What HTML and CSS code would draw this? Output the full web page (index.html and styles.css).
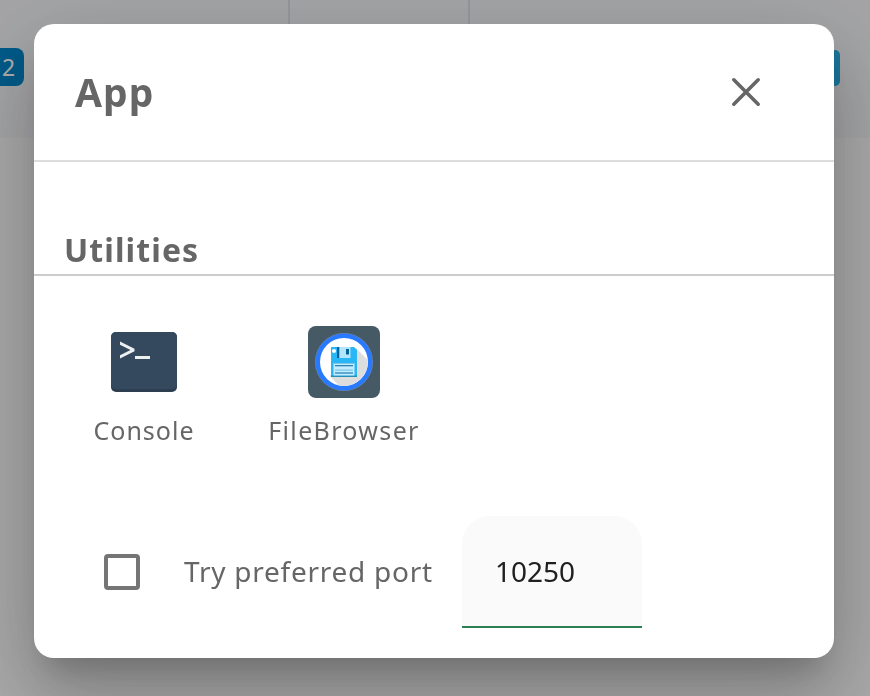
FILE: index.html
```html
<!DOCTYPE html>
<html lang="en">
<head>
<meta charset="utf-8">
<title>App</title>
<link rel="stylesheet" href="styles.css">
</head>
<body>
<div class="page">
  <div class="toolbar">
    <div class="cell cell-first"><span class="chip">2</span></div>
    <div class="cell cell-second"></div>
    <div class="cell cell-last"><span class="chip chip-light"></span></div>
  </div>
</div>
<div class="backdrop">
  <section class="dialog">
    <header class="dialog-header">
      <h1>App</h1>
      <svg class="close" viewBox="0 0 32 32"><path d="M3.800 3.800 28.200 28.200M28.200 3.800 3.800 28.200" fill="none" stroke="#666" stroke-width="3.600" stroke-linecap="round"/></svg>
    </header>
    <h2>Utilities</h2>
    <div class="apps">
      <div class="app app-console">
        <svg viewBox="0 0 72 72">
          <rect x="3" y="6" width="66" height="60" rx="5" fill="#2c3e50"/>
          <path d="M8 6h56a5 5 0 0 1 5 5v47a5 5 0 0 1-5 5H8a5 5 0 0 1-5-5V11a5 5 0 0 1 5-5z" fill="#34495e"/>
          <path d="M12 15.500 26.500 22.700V25.300L12 32.500V29.300L22.500 24 12 18.800zM27 30h15v3H27z" fill="#ecf0f1"/>
        </svg>
        <span>Console</span>
      </div>
      <div class="app app-files">
        <svg viewBox="0 0 72 72">
          <rect width="72" height="72" rx="8" fill="#455a64"/>
          <circle cx="36" cy="36" r="29" fill="#7488a0"/>
          <circle cx="36" cy="36" r="28.500" fill="#2979ff"/>
          <circle cx="36" cy="36" r="24" fill="#fff"/>
          <path d="M48 22 59.700 34A24 24 0 0 1 30.500 59.300L22 50z" fill="#ddd"/>
          <path d="M23 21h23l3 3v27H23z" fill="#29b6f6"/>
          <path d="M29 21h13.500v11H29z" fill="#b3e5fc"/>
          <path d="M29 21h2.300v11H29zM38 23h3v5.500h-3z" fill="#01649b"/>
          <circle cx="26" cy="25" r="2" fill="#fff"/>
          <path d="M23 49.500h26V51H23z" fill="#258fb5"/>
          <path d="M25.500 37h21v12.500h-21z" fill="#c2ecff"/>
          <path d="M25.500 37h21v1h-21zM27 43.500h18v1.200H27z" fill="#7fc6e4"/>
          <path d="M27 39.200h18v1H27zM27 46.500h18v1H27z" fill="#01649b"/>
        </svg>
        <span>FileBrowser</span>
      </div>
    </div>
    <div class="port-row">
      <span class="checkbox"></span>
      <span class="port-label">Try preferred port</span>
      <div class="field"><span class="port-value">10250</span></div>
    </div>
  </section>
</div>
</body>
</html>
```
FILE: styles.css
```css
* { box-sizing: border-box; }

body {
  margin: 0;
  width: 870px;
  height: 696px;
  overflow: hidden;
  background: #fafafa;
  color: #666;
  font-family: "Noto Sans", "Open Sans", sans-serif;
}

.toolbar {
  display: flex;
  height: 138px;
  background: #f3f4f6;
}

.cell { border-right: 2px solid #dce0e6; padding-top: 48px; }
.cell-first { width: 290px; }
.cell-second { width: 180px; }
.cell-last { width: 400px; border: 0; padding: 50px 30px 0 0; }

.chip {
  display: block;
  width: 24px;
  height: 38px;
  padding-left: 2px;
  border-radius: 0 8px 8px 0;
  background: #0086c9;
  color: #fff;
  font: 23px/39px "Noto Sans", sans-serif;
}

.chip-light {
  width: 40px;
  height: 36px;
  margin-left: auto;
  border-radius: 5px;
  background: #27afe8;
}

.backdrop {
  position: fixed;
  inset: 0;
  padding: 24px 36px 38px 34px;
  background: rgba(0, 0, 0, .32);
}

.dialog {
  height: 634px;
  border-radius: 20px;
  background: #fff;
  box-shadow: 0 22px 30px -14px rgba(0, 0, 0, .2),
    0 48px 76px 6px rgba(0, 0, 0, .14),
    0 18px 92px 16px rgba(0, 0, 0, .12);
}

.dialog-header {
  display: flex;
  align-items: center;
  justify-content: space-between;
  height: 138px;
  padding: 0 72px 0 41px;
  border-bottom: 2px solid #ddd;
}

h1, h2 { margin: 0; font-weight: 700; }
h1 { font-size: 39px; line-height: 54px; letter-spacing: 1px; }
.close { width: 32px; height: 32px; }

h2 {
  height: 114px;
  padding: 66px 0 0 30px;
  border-bottom: 2px solid #ccc;
  font-size: 32px;
  line-height: 44px;
  letter-spacing: 1.100px;
}

.apps { display: flex; padding: 50px 0 0 20px; height: 240px; }
.app {
  display: flex;
  flex-direction: column;
  align-items: center;
  font-size: 25px;
  line-height: 34px;
  letter-spacing: 1px;
}
.app-console { width: 180px; }
.app-files { width: 220px; letter-spacing: 1.350px; }
.app svg { width: 72px; height: 72px; margin-bottom: 15px; }

.port-row { display: flex; align-items: center; height: 112px; padding-left: 70px; }
.checkbox { width: 36px; height: 36px; border: 4px solid #757575; border-radius: 4px; }
.port-label {
  width: 278px;
  margin-left: 44px;
  padding-bottom: 2px;
  font-size: 28px;
  line-height: 38px;
  white-space: nowrap;
  letter-spacing: .750px;
}

.field {
  display: flex;
  align-items: center;
  width: 180px;
  height: 112px;
  padding: 0 0 2px 33px;
  border-radius: 28px 28px 0 0;
  background: linear-gradient(#28804f, #28804f) bottom / 100% 2px no-repeat, #fafafa;
  color: #202020;
  font-size: 28px;
}
```
